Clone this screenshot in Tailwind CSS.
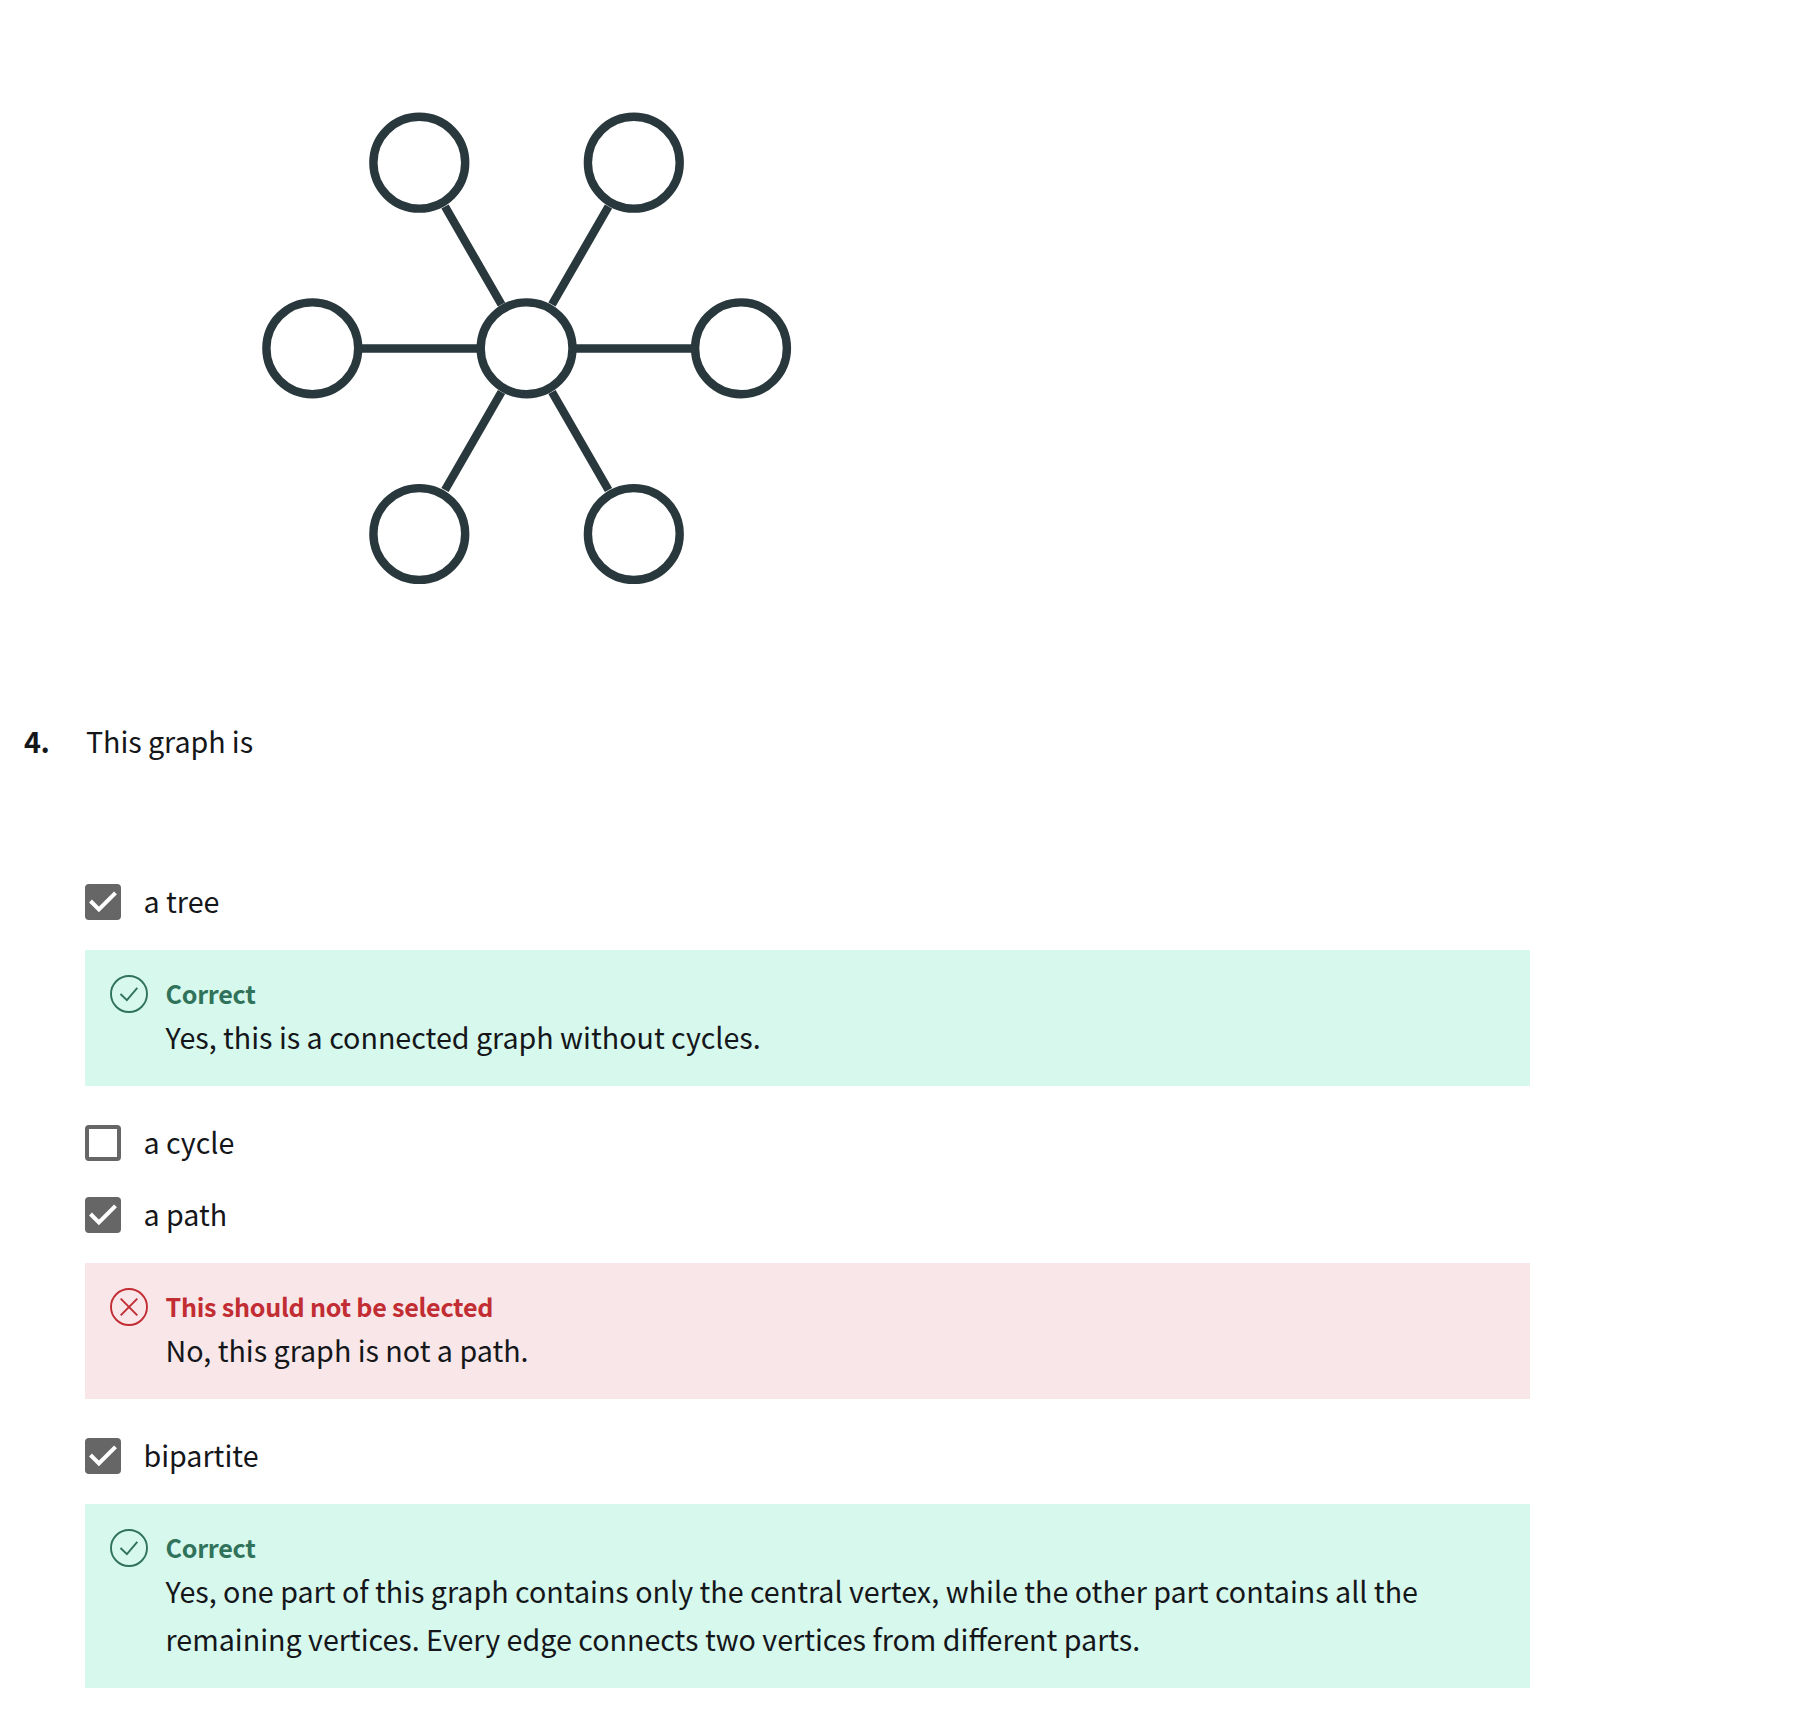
<!DOCTYPE html>
<html lang="en"><head><meta charset="utf-8"><title>Graph quiz</title>
<script src="https://cdn.jsdelivr.net/npm/@tailwindcss/browser@4"></script></head>
<body class="bg-white text-[#14161a] font-['Noto_Sans_CJK_SC',sans-serif] text-[28.65px] leading-[48px]">
<svg class="hidden">
<symbol id="box" viewBox="0 0 36 36"><rect width="36" height="36" rx="4" fill="#666"/><path d="M5.500 17L13.900 25.400L30.500 8.800" fill="none" stroke="#fff" stroke-width="4"/></symbol>
<symbol id="ok" viewBox="0 0 38 38"><g fill="none" stroke="currentColor" stroke-width="1.900"><circle cx="19" cy="19" r="18"/><path d="M10.500 19L16.900 25.200L27.300 12.800"/></g></symbol>
<symbol id="bad" viewBox="0 0 38 38"><g fill="none" stroke="currentColor" stroke-width="1.900"><circle cx="19" cy="19" r="18"/><path d="M10.700 10.700L27.300 27.300M27.300 10.700L10.700 27.300"/></g></symbol>
</svg>
<main class="flex flex-col h-[1716px] overflow-hidden">
<svg class="block shrink-0" width="1060" height="700" viewBox="0 0 1060 700" fill="none" stroke="#29383d" stroke-width="8.400">
<path d="M361 348.500H478M576 348.500H692M445 206.500L501.500 304.500M608.500 206.500L552 304.500M445 490L501.500 392M608.500 490L552 392"/>
<circle cx="419.300" cy="162.700" r="45.900"/><circle cx="633.800" cy="162.700" r="45.900"/><circle cx="312.300" cy="348.300" r="45.900"/><circle cx="526.600" cy="348.300" r="45.900"/><circle cx="741" cy="348.300" r="45.900"/><circle cx="419.300" cy="534" r="45.900"/><circle cx="633.800" cy="534" r="45.900"/>
</svg>
<section class="flex pt-[17px]">
<b class="w-[61px] ml-6 shrink-0 tracking-[-0.4px]">4.</b>
<div class="w-[1445px]">
<p class="pl-px tracking-[-0.05px]">This graph is</p>
<div class="mt-[119px] flex h-9 gap-[22.5px]"><svg class="size-9"><use href="#box"/></svg><span class="leading-[33px]">a tree</span></div>
<div class="mt-[30px] flex gap-[17.5px] bg-[#d7f8ed] px-[25px] py-[25px]">
<svg class="size-[38px] shrink-0 text-[#30725a]"><use href="#ok"/></svg>
<div><h3 class="mb-0.5 text-[25.1px] leading-9 font-bold tracking-[-0.25px] text-[#30725a]">Correct</h3><p>Yes, this is a connected graph without cycles.</p></div></div>
<div class="mt-[39px] flex h-9 gap-[22.5px]"><span class="size-9 rounded border-4 border-[#666]"></span><span class="leading-[33px]">a cycle</span></div>
<div class="mt-9 flex h-9 gap-[22.5px]"><svg class="size-9"><use href="#box"/></svg><span class="leading-[33px]">a path</span></div>
<div class="mt-[30px] flex gap-[17.5px] bg-[#f8e6e8] px-[25px] py-[25px]">
<svg class="size-[38px] shrink-0 text-[#c22d33]"><use href="#bad"/></svg>
<div><h3 class="mb-0.5 text-[25.1px] leading-9 font-bold tracking-[-0.25px] text-[#c22d33]">This should not be selected</h3><p>No, this graph is not a path.</p></div></div>
<div class="mt-[39px] flex h-9 gap-[22.5px]"><svg class="size-9"><use href="#box"/></svg><span class="leading-[33px]">bipartite</span></div>
<div class="mt-[30px] flex gap-[17.5px] bg-[#d7f8ed] px-[25px] py-[25px]">
<svg class="size-[38px] shrink-0 text-[#30725a]"><use href="#ok"/></svg>
<div><h3 class="mb-0.5 text-[25.1px] leading-9 font-bold tracking-[-0.25px] text-[#30725a]">Correct</h3><p class="whitespace-nowrap">Yes, one part of this graph contains only the central vertex, while the other part contains all the<br>remaining vertices. Every edge connects two vertices from different parts.</p></div></div>
</div>
</section>
</main></body></html>
